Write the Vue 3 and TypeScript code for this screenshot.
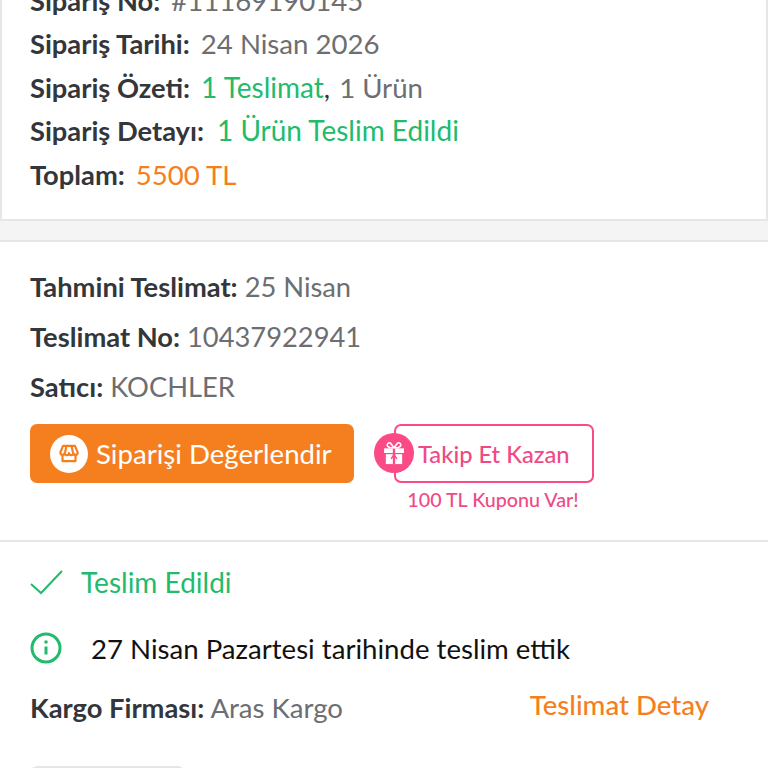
<script setup lang="ts">
interface SummaryPart {
  text: string;
  tone: string;
}

interface SummaryRow {
  label: string;
  parts: SummaryPart[];
}

const summaryRows: SummaryRow[] = [
  { label: "Sipariş No:", parts: [{ text: "#11169190145", tone: "muted" }] },
  { label: "Sipariş Tarihi:", parts: [{ text: "24 Nisan 2026", tone: "muted" }] },
  {
    label: "Sipariş Özeti:",
    parts: [
      { text: "1 Teslimat", tone: "green" },
      { text: ",", tone: "dark" },
      { text: " 1 Ürün", tone: "muted nudge" }
    ]
  },
  { label: "Sipariş Detayı:", parts: [{ text: "1 Ürün Teslim Edildi", tone: "green nudge" }] },
  { label: "Toplam:", parts: [{ text: "5500 TL", tone: "orange" }] }
];

const deliveryRows = [
  { label: "Tahmini Teslimat:", value: "25 Nisan" },
  { label: "Teslimat No:", value: "10437922941" },
  { label: "Satıcı:", value: "KOCHLER" }
];
</script>

<template>
  <div class="page">
    <section class="summary">
      <div v-for="row in summaryRows" :key="row.label" class="summary-row">
        <b class="label">{{ row.label }}</b>
        <span class="value">
          <span v-for="part in row.parts" :key="part.text" :class="part.tone">{{ part.text }}</span>
        </span>
      </div>
    </section>

    <div class="band"></div>

    <section class="delivery">
      <div v-for="row in deliveryRows" :key="row.label" class="delivery-row">
        <b class="label">{{ row.label }}</b> <span class="muted">{{ row.value }}</span>
      </div>
      <div class="actions">
        <button class="rate-btn">
          <span class="rate-icon">
            <svg viewBox="0 0 24 24" width="26" height="26" fill="none" stroke="#f57f1e" stroke-width="2" stroke-linejoin="round" stroke-linecap="round">
              <path d="M6.5 4.5h11l2.5 6a2 2 0 0 1-4 .6 2 2 0 0 1-4 0 2 2 0 0 1-4 0 2 2 0 0 1-4-.6z" />
              <path d="M9.5 5l-1 5M14.5 5l1 5" />
              <path d="M6 13v5.5h12V13" />
            </svg>
          </span>
          Siparişi Değerlendir
        </button>
        <div class="follow">
          <div class="follow-box">
            <span class="gift">
              <svg viewBox="0 0 24 24" width="28" height="28" fill="#fff">
                <rect x="3.5" y="8" width="17" height="4" />
                <rect x="5" y="13" width="14" height="8.5" />
                <rect x="11" y="8" width="2" height="13.5" fill="#fb4b86" />
                <path d="M12 7.5 9 3.6a1.9 1.9 0 0 0-2.6 2.6L8.5 7.5zM12 7.5l3-3.9a1.9 1.9 0 0 1 2.6 2.6l-2.1 1.3z" fill="none" stroke="#fff" stroke-width="1.3" />
                <path d="M12 13.5 9.5 17M12 13.5l2.5 3.5" stroke="#fb4b86" stroke-width="1.2" fill="none" />
              </svg>
            </span>
            Takip Et Kazan
          </div>
          <div class="coupon">100 TL Kuponu Var!</div>
        </div>
      </div>
    </section>

    <section class="status">
      <div class="status-row">
        <svg class="check" viewBox="0 0 33 25" width="33" height="25" fill="none" stroke="#22bb6c" stroke-width="2">
          <path d="M1 14l10 9L32 1" />
        </svg>
        <span class="green">Teslim Edildi</span>
      </div>
      <div class="info-row">
        <svg viewBox="0 0 32 32" width="32" height="32" fill="none" stroke="#22bb6c">
          <circle cx="16" cy="16" r="14" stroke-width="3" />
          <path d="M16 14.5v8" stroke-width="3" />
          <circle cx="16" cy="10" r="1.8" fill="#22bb6c" stroke="none" />
        </svg>
        <span>27 Nisan Pazartesi tarihinde teslim ettik</span>
      </div>
      <div class="cargo-row">
        <div><b class="label">Kargo Firması:</b> <span class="muted">Aras Kargo</span></div>
        <a class="detail-link">Teslimat Detay</a>
      </div>
      <div class="next-btn"></div>
    </section>
  </div>
</template>

<style>
html,
body {
  overflow: hidden;
  background: #fff;
}
</style>

<style scoped>
.page {
  height: 768px;
  overflow: hidden;
  font-family: Lato, "Liberation Sans", sans-serif;
  font-size: 27.6px;
  color: #333;
  background: #fff;
}

.label {
  font-size: 27.3px;
  font-weight: 700;
  color: #33363a;
}

.muted {
  color: #6c6e71;
}

.green {
  font-size: 28px;
  color: #22bb6c;
}

.orange {
  color: #f57f1e;
}

.dark {
  color: #333;
}

.nudge {
  margin-left: 2px;
}

.summary {
  box-sizing: border-box;
  height: 221px;
  padding: 0 0 23px 28px;
  border: solid #e6e6e6;
  border-width: 0 2px 2px 2px;
  display: flex;
  flex-direction: column;
  justify-content: flex-end;
}

.summary-row {
  height: 43.5px;
  line-height: 43.5px;
  white-space: nowrap;
}

.value {
  margin-left: 11px;
}

.band {
  height: 19px;
  background: #f4f4f4;
  border-bottom: 2px solid #e6e6e6;
}

.delivery {
  height: 300px;
  box-sizing: border-box;
  padding: 20px 30px 0;
  border-bottom: 2px solid #e6e6e6;
  font-size: 27.3px;
}

.delivery-row {
  height: 50px;
  line-height: 50px;
}

.actions {
  display: flex;
  align-items: flex-start;
  margin-top: 12px;
}

.rate-btn {
  width: 324px;
  height: 59px;
  display: flex;
  align-items: center;
  gap: 8px;
  padding: 0 0 0 20px;
  border: none;
  border-radius: 7px;
  background: #f57f1e;
  color: #fff;
  font: inherit;
  font-size: 27.6px;
}

.rate-icon {
  width: 38px;
  height: 38px;
  border-radius: 50%;
  background: #fff;
  display: flex;
  align-items: center;
  justify-content: center;
}

.follow {
  margin-left: 40px;
  width: 200px;
}

.follow-box {
  position: relative;
  box-sizing: border-box;
  height: 59px;
  padding-left: 22px;
  border: 2px solid #fb4b86;
  border-radius: 7px;
  color: #f04a86;
  font-size: 23.7px;
  font-weight: 500;
  display: flex;
  align-items: center;
}

.gift {
  position: absolute;
  left: -22px;
  top: 7px;
  width: 40px;
  height: 40px;
  border-radius: 50%;
  background: #fb4b86;
  display: flex;
  align-items: center;
  justify-content: center;
}

.coupon {
  margin-top: 5px;
  margin-left: -2px;
  color: #f04a86;
  font-size: 19.7px;
  font-weight: 500;
  text-align: center;
}

.status {
  padding: 0 30px;
}

.status-row {
  display: flex;
  align-items: center;
  gap: 18px;
  height: 80px;
}

.info-row {
  display: flex;
  align-items: center;
  gap: 29px;
  height: 50px;
  margin-top: 1px;
  color: #111;
}

.cargo-row {
  display: flex;
  justify-content: space-between;
  align-items: center;
  height: 68px;
  padding-right: 29px;
}

.detail-link {
  color: #f57f1e;
  font-weight: 500;
  position: relative;
  top: -3px;
}

.next-btn {
  width: 155px;
  height: 40px;
  margin-top: 25px;
  box-sizing: border-box;
  border: 2px solid #e6e6e6;
  border-radius: 7px;
}
</style>
